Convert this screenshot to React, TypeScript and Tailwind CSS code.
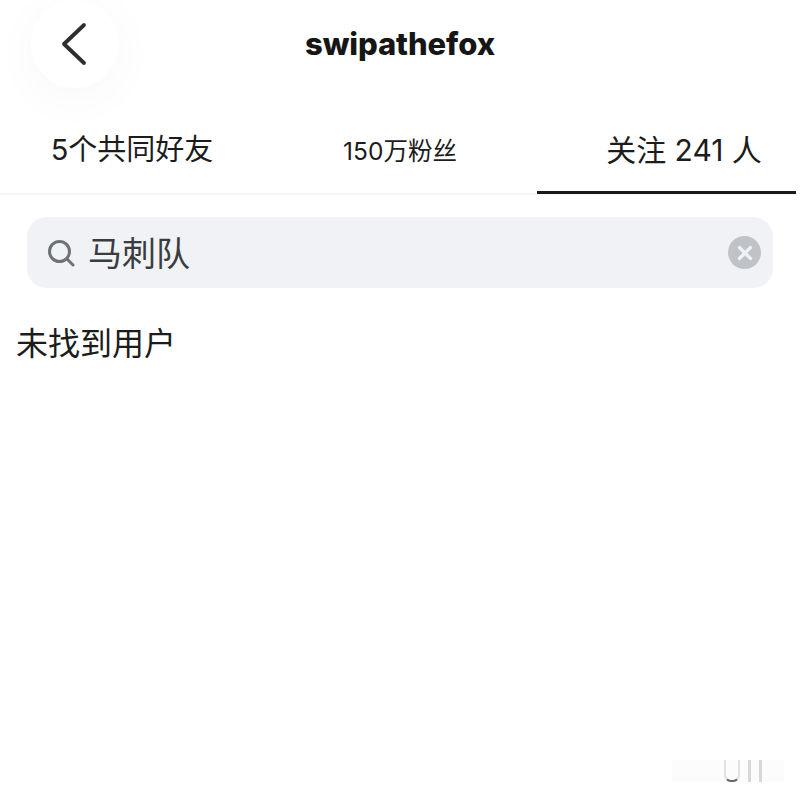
import { X } from "lucide-react";

const cjk = "font-['Inter','Noto_Sans_CJK_SC',sans-serif]";

// tabs under the header
const Tabs = () => (
	<div className="flex h-[69px] border-b-2 border-[#f6f6f6]">
		<div className="flex w-[267px] items-center justify-center pb-[20px] pr-[3px] text-[29px] leading-none text-[#1c1c1c]">
			5个共同好友
		</div>
		<div className="flex w-[270px] items-center justify-center pb-[17px] pr-[4px] text-[24.5px] leading-none text-[#1c1c1c]">
			150万粉丝
		</div>
		<div className="flex h-[68px] w-[259px] items-center justify-center border-b-[3px] border-[#1a1a1a] pb-[18px] pl-[37px] pr-[2px] text-[30px] leading-none whitespace-nowrap text-[#1c1c1c]">
			关注 241 人
		</div>
	</div>
);

export default function App() {
	return (
		<div className={`relative h-[800px] w-[800px] overflow-hidden bg-white ${cjk}`}>
			{/* header */}
			<div className="relative flex h-[126px] items-start">
				<div className="ml-[31px] flex h-[88px] w-[88px] items-center justify-center rounded-full bg-white shadow-[0_10px_50px_rgba(0,0,0,0.035)]">
					<svg width="30" height="44" viewBox="0 0 30 44" fill="none" className="-ml-[2px]">
						<path d="M25 3 L5 22 L25 41" stroke="#2e2e2e" strokeWidth="3.8" strokeLinecap="round" strokeLinejoin="round" />
					</svg>
				</div>
				<div className="absolute left-0 right-0 top-[24px] text-center font-['Inter',sans-serif] text-[31px] leading-[40px] font-extrabold tracking-[-0.1px] text-[#161616]">
					swipathefox
				</div>
			</div>

			<Tabs />

			{/* search */}
			<div className="mx-[27px] mt-[22px] flex h-[71px] items-center rounded-[20px] bg-[#f0f2f5] pl-[20px] pr-[12px]">
				<svg width="28" height="28" viewBox="0 0 28 28" fill="none" className="shrink-0">
					<circle cx="12.5" cy="12.5" r="10" stroke="#6f7275" strokeWidth="3" />
					<path d="M20 20 L26 26" stroke="#6f7275" strokeWidth="3" strokeLinecap="round" />
				</svg>
				<span className="ml-[13px] pt-[2px] text-[34px] leading-none text-[#3a3d40]">马刺队</span>
				<div className="ml-auto flex h-[33px] w-[33px] items-center justify-center rounded-full bg-[#bfc2c6]">
					<X size={22} strokeWidth={3.6} color="#f0f2f5" />
				</div>
			</div>

			{/* empty state */}
			<div className="mt-[38px] pl-[16px] text-[32px] leading-[36px] text-[#1c1c1c]">未找到用户</div>

			{/* faint smudge bottom right */}
			<div className="absolute left-[672px] top-[760px] flex h-[22px] w-[112px] items-end bg-[#fcfcfc]">
				<div className="ml-[52px] h-[22px] w-[16px] rounded-b-[7px] border-x-2 border-b-2 border-x-[#e2e2e2] border-b-[#666666]" />
				<div className="ml-[8px] h-[22px] w-[3px] bg-[#d8d8d8]" />
				<div className="ml-[8px] h-[22px] w-[3px] bg-[#d8d8d8]" />
			</div>
		</div>
	);
}
